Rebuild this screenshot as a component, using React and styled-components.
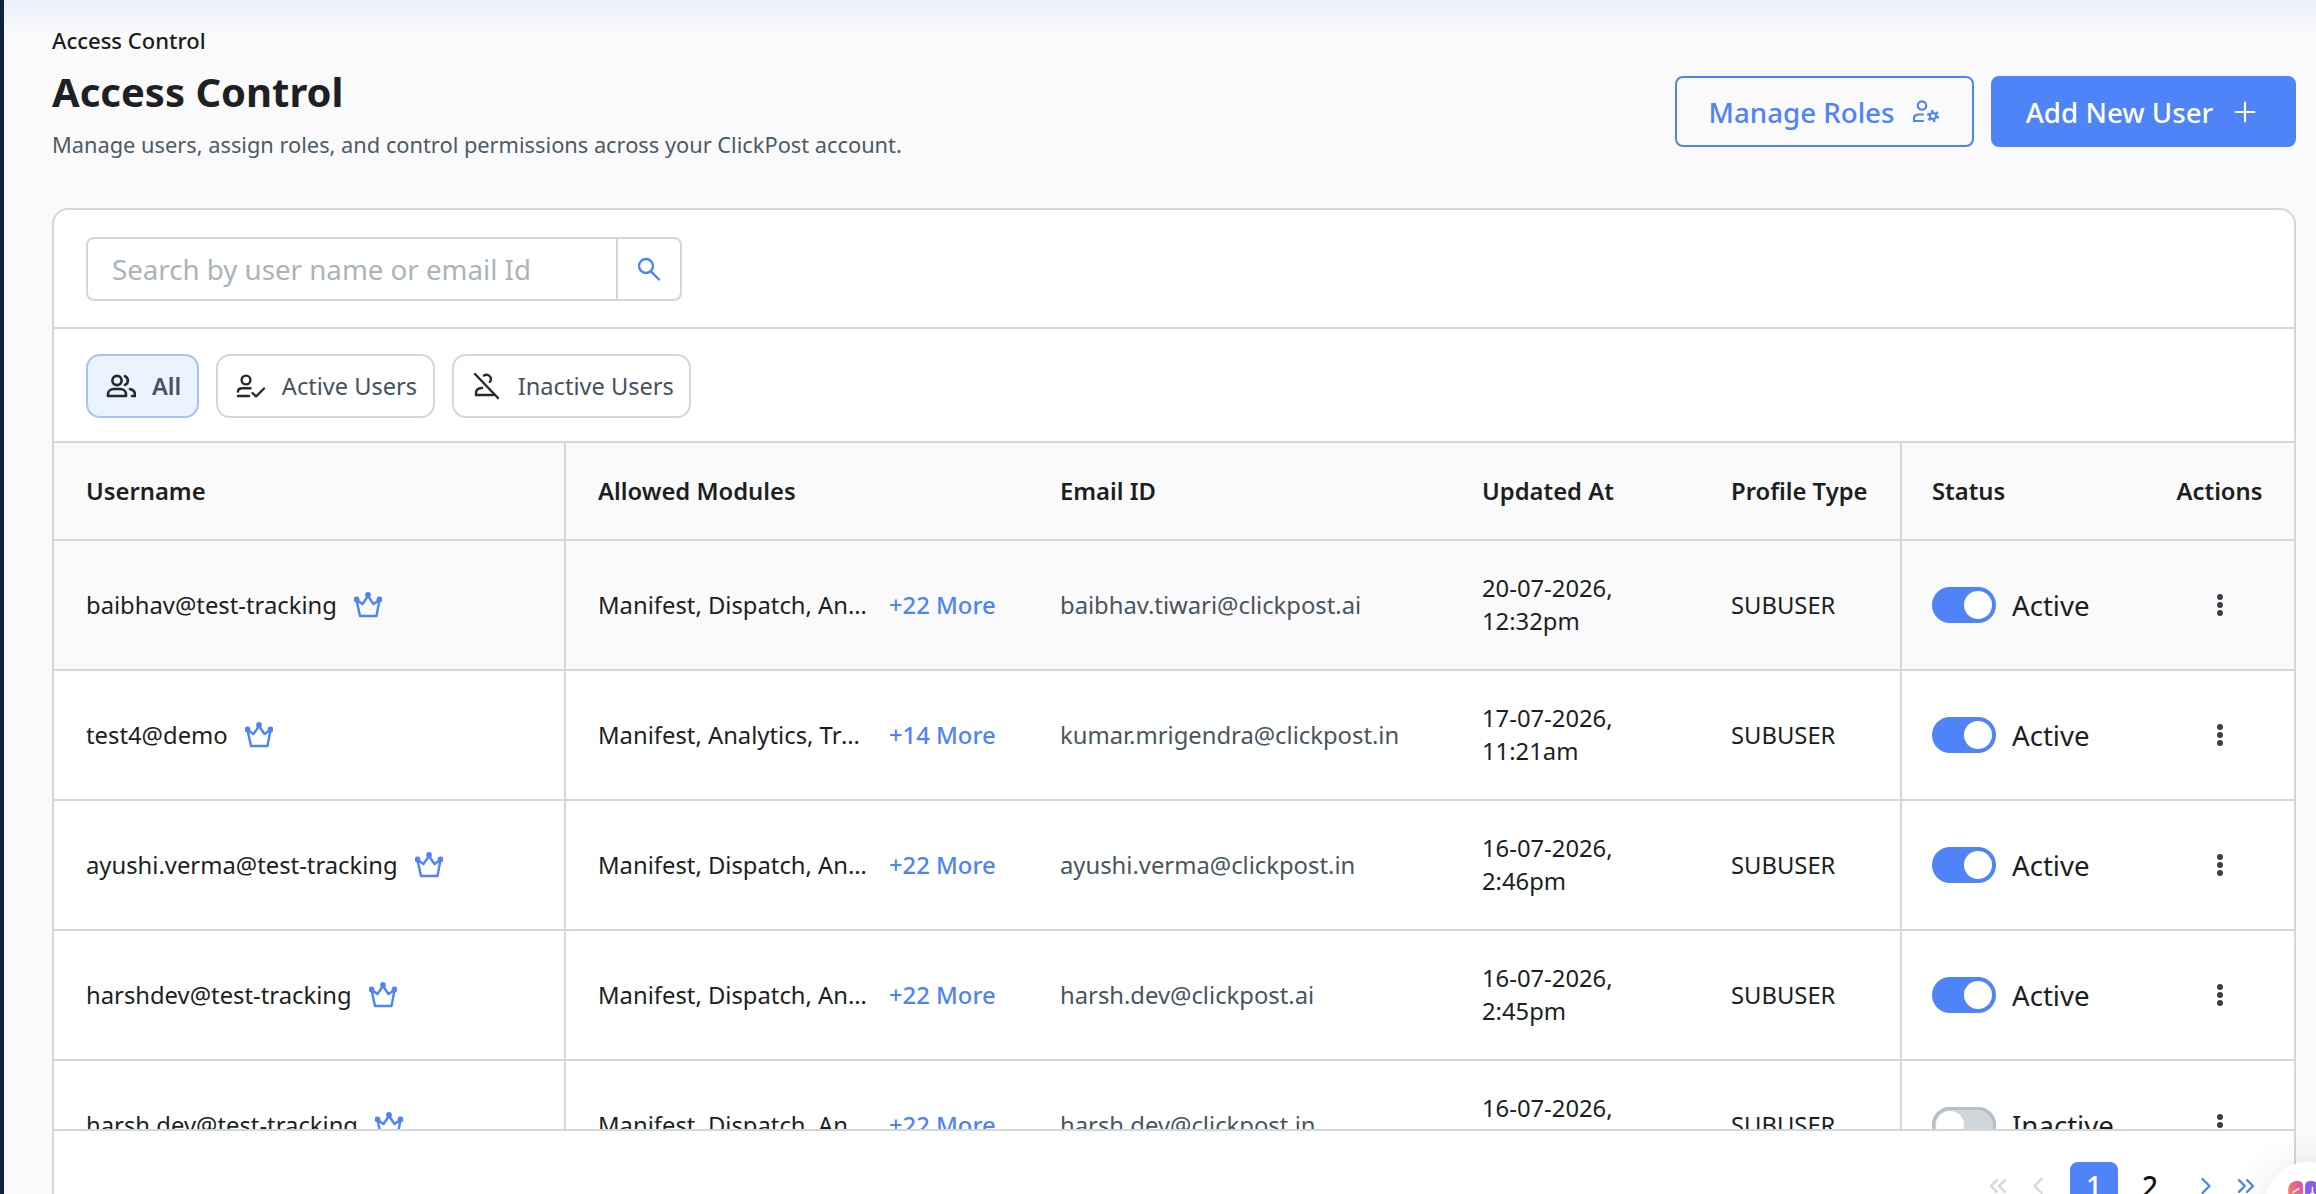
import React from 'react';
import styled, { createGlobalStyle } from 'styled-components';
import { ChevronLeft, ChevronRight, ChevronsLeft, ChevronsRight, Plus } from 'lucide-react';

const Global = createGlobalStyle`
  html, body { margin: 0; height: 1194px; overflow: hidden; background: #fafafa; }
  body { font-family: "Noto Sans", "Open Sans", sans-serif; color: #1a1d20; }
  * { box-sizing: border-box; }
`;

const Shell = styled.div`display: flex; height: 1194px; overflow: hidden; position: relative;`;
const Strip = styled.div`width: 4px; flex: none; background: #10243b;`;
const Main = styled.main`
  flex: 1; min-width: 0; padding: 27px 20px 0 48px;
  background: linear-gradient(#e9eefa 0, #f1f3fa 14px, #fafafa 36px);
`;
const Header = styled.header`display: flex; justify-content: space-between; align-items: flex-start; height: 181px;`;
const Crumb = styled.div`font-size: 22px; line-height: 26px; font-weight: 500; color: #1a1d20;`;
const Title = styled.h1`margin: 11px 0 11px; font-size: 40px; line-height: 56px; font-weight: 700; color: #1e2124;`;
const Sub = styled.p`margin: 0; font-size: 21.8px; line-height: 28px; color: #4a5b68;`;
const Actions = styled.div`display: flex; gap: 17px; margin-top: 49px;`;
const Btn = styled.button`
  height: 71px; display: flex; align-items: center; gap: ${p => p.$gap}px; font: 500 27.7px "Noto Sans", sans-serif;
  border: 2px solid #4f83f8; border-radius: 8px; cursor: pointer;
  width: ${p => p.$w}px; justify-content: center;
  background: ${p => p.$primary ? '#4f83f8' : '#fafafa'};
  color: ${p => p.$primary ? '#fff' : '#4f83f8'};
`;
const Card = styled.section`border: 2px solid #d0d7dd; border-radius: 16px 16px 0 0; background: #fff; height: 1100px;`;
const SearchRow = styled.div`padding: 27px 32px 26px; border-bottom: 2px solid #d0d7dd;`;
const SearchBox = styled.div`
  width: 596px; height: 64px; display: flex; border: 2px solid #d0d7dd; border-radius: 8px; background: #fff;
`;
const Placeholder = styled.div`
  flex: 1; padding-left: 24px; display: flex; align-items: center; font-size: 27.7px; color: #a9b4bc;
  border-right: 2px solid #d0d7dd;
`;
const SearchBtn = styled.div`width: 62px; display: flex; align-items: center; justify-content: center; color: #4f83f8;`;
const Chips = styled.div`display: flex; gap: 17px; padding: 25px 32px 23px; border-bottom: 2px solid #d0d7dd;`;
const Chip = styled.div`
  height: 64px; display: flex; align-items: center; gap: 16px; padding: 0 15.6px 0 18px;
  border: 2px solid ${p => p.$on ? '#a5c3fb' : '#d0d7dd'}; border-radius: 14px;
  background: ${p => p.$on ? '#ebf3fe' : '#fff'};
  color: #45535f; font-size: 23.6px; font-weight: ${p => p.$on ? 600 : 400};
  svg { color: #23292f; flex: none; }
`;
const TableWrap = styled.div`height: 688px; overflow: hidden; border-bottom: 2px solid #d0d7dd;`;
const Row = styled.div`
  display: grid; grid-template-columns: 512px 462px 422px 249px 203px 243px 1fr;
  height: ${p => p.$head ? 98 : 130}px; border-bottom: 2px solid #d0d7dd;
  background: ${p => p.$shade ? '#fafafa' : '#fff'};
`;
const Cell = styled.div`
  display: flex; align-items: center; min-width: 0; padding-left: ${p => p.$pad ?? 32}px;
  ${p => p.$sep && 'border-right: 2px solid #d0d7dd;'}
  ${p => p.$center && 'justify-content: center; padding-left: 0;'}
  font-size: 23.8px; color: ${p => p.$muted ? '#47555f' : '#1c1f22'};
`;
const HeadCell = styled(Cell)`font-weight: 600; color: #1c1f22;`;
const Name = styled.span`margin-right: 17px; white-space: nowrap;`;
const Modules = styled.span`width: 272px; overflow: hidden; white-space: nowrap; text-overflow: ellipsis;`;
const More = styled.span`margin-left: 19px; color: #4f83f8; font-weight: 500; white-space: nowrap;`;
const Stamp = styled.span`line-height: 33px;`;
const Toggle = styled.div`
  width: 64px; height: 36px; border-radius: 18px; display: flex; align-items: center; padding: 0 4px; flex: none;
  justify-content: ${p => p.$on ? 'flex-end' : 'flex-start'};
  background: ${p => p.$on ? '#4f83f8' : '#d0d7dc'};
  ${p => !p.$on && 'box-shadow: inset 0 0 0 3px #b6bfc6;'}
`;
const Knob = styled.div`width: 28px; height: 28px; border-radius: 50%; background: #fff;`;
const StatusText = styled.span`margin-left: 16px; font-size: 27.6px; color: #1c1f22;`;
const Pager = styled.nav`display: flex; justify-content: flex-end; align-items: flex-start; padding: 31px 28px 0 0;`;
const PageIcon = styled.div`
  width: 40px; height: 48px; display: flex; align-items: center; justify-content: center;
  color: ${p => p.$off ? '#d0d7dd' : '#4f83f8'};
`;
const PageNum = styled.div`
  width: 48px; height: 48px; margin: 0 ${p => p.$mr ?? 0}px 0 ${p => p.$ml ?? 0}px; border-radius: 8px; display: flex; align-items: center; justify-content: center;
  font-size: 28px; font-weight: 500;
  background: ${p => p.$on ? '#4f83f8' : 'transparent'}; color: ${p => p.$on ? '#fff' : '#111'};
`;
const Bubble = styled.div`
  position: absolute; left: 2264px; top: 1162px; width: 90px; height: 90px; border-radius: 50%; background: #fff;
  box-shadow: 0 0 36px rgba(40,50,70,.10); padding: 19px 0 0 24px;
`;

const Crown = () => (
  <svg width="28" height="26" viewBox="0 0 28 26" fill="none" stroke="#4f83f8" strokeWidth="2.4" strokeLinejoin="round">
    <path d="M14 4 L19.5 12 L25.5 8 L22.5 24 H6 L2.5 8 L8.5 12 Z" />
    <circle cx="14" cy="3" r="1.7" fill="#4f83f8" /><circle cx="2.5" cy="7.5" r="1.7" fill="#4f83f8" /><circle cx="25.5" cy="7.5" r="1.7" fill="#4f83f8" />
  </svg>
);
const Dots = () => (
  <svg width="10" height="26" viewBox="0 0 10 26" fill="#36414a"><circle cx="5" cy="5" r="3" /><circle cx="5" cy="13" r="3" /><circle cx="5" cy="21" r="3" /></svg>
);
const SearchIcon = () => (
  <svg width="26" height="26" viewBox="0 0 26 26" fill="none" stroke="currentColor" strokeWidth="2.4" strokeLinecap="round">
    <circle cx="10" cy="10" r="7" />
    <path d="M15 15.500l8 8" />
  </svg>
);
const UsersIcon = () => (
  <svg width="30" height="24" viewBox="0 0 30 24" fill="none" stroke="currentColor" strokeWidth="2.6" strokeLinecap="round" strokeLinejoin="round">
    <circle cx="11" cy="6.5" r="4.6" />
    <path d="M2 22v-1.5C2 17 4.800 15 8 15h6c3.200 0 6 2 6 5.500V22z" />
    <path d="M19 2.200a4.800 4.800 0 0 1 0 8.800" />
    <path d="M24 15c2.800.8 5 2.600 5 5.500V22h-3" />
  </svg>
);
const UserCheckIcon = () => (
  <svg width="30" height="24" viewBox="0 0 30 24" fill="none" stroke="currentColor" strokeWidth="2.4" strokeLinecap="round" strokeLinejoin="round">
    <circle cx="10" cy="6" r="4.4" />
    <path d="M2 17.500c0-2 2-3.200 4.500-3.200h8" />
    <path d="M2 22h11" />
    <path d="M16.500 19l3.500 3.500 8-8" />
  </svg>
);
const UserOffIcon = () => (
  <svg width="30" height="28" viewBox="0 0 30 28" fill="none" stroke="currentColor" strokeWidth="2.4" strokeLinecap="round" strokeLinejoin="round">
    <path d="M3 2l23 24" />
    <path d="M12 3.500a4.500 4.500 0 0 1 7 3.500c0 1.200-.4 2.200-1.200 3" />
    <path d="M4 23v-2c0-3 2.500-4.800 6-5" />
    <path d="M4 23h17" />
  </svg>
);
const RolesIcon = () => (
  <svg width="28" height="23" viewBox="0 0 28 23" fill="none" stroke="currentColor" strokeWidth="2.2" strokeLinecap="round" strokeLinejoin="round">
    <circle cx="10" cy="5.500" r="4.200" />
    <path d="M2 21v-2.500c0-2.500 2.200-4 5-4h4" />
    <path d="M2 21h9" />
    <circle cx="21" cy="16" r="3.100" strokeWidth="2" />
    <circle cx="21" cy="16" r="5" strokeWidth="2.200" strokeLinecap="butt" strokeDasharray="2.600 2.640" />
  </svg>
);
const Logo = () => (
  <svg width="32" height="22" viewBox="0 0 43 30">
    <defs>
      <linearGradient id="lg" x1="0" y1="1" x2="1" y2="0"><stop offset="0" stopColor="#f59a3c" /><stop offset="1" stopColor="#d946b8" /></linearGradient>
    </defs>
    <path d="M0 30V12C0 5 5 0 12 0c4 0 8 1 8 6v24z" fill="url(#lg)" />
    <path d="M23 30V6c0-5 4-6 8-6 7 0 12 5 12 12v18z" fill="#8b5cf0" />
    <path d="M6 16l9-6M33 8v8M28 20l5-4 5 4" stroke="#fff" strokeWidth="2" fill="none" />
  </svg>
);

const users = [
  ['baibhav@test-tracking', 'Manifest, Dispatch, Analytics, Tracking', '+22 More', 'baibhav.tiwari@clickpost.ai', '20-07-2026,', '12:32pm', true, true],
  ['test4@demo', 'Manifest, Analytics, Tracking, Returns', '+14 More', 'kumar.mrigendra@clickpost.in', '17-07-2026,', '11:21am', true],
  ['ayushi.verma@test-tracking', 'Manifest, Dispatch, Analytics, Tracking', '+22 More', 'ayushi.verma@clickpost.in', '16-07-2026,', '2:46pm', true],
  ['harshdev@test-tracking', 'Manifest, Dispatch, Analytics, Tracking', '+22 More', 'harsh.dev@clickpost.ai', '16-07-2026,', '2:45pm', true],
  ['harsh.dev@test-tracking', 'Manifest, Dispatch, Analytics, Tracking', '+22 More', 'harsh.dev@clickpost.in', '16-07-2026,', '2:44pm', false],
];

export default function App() {
  return (
    <Shell>
      <Global />
      <Strip />
      <Main>
        <Header>
          <div>
            <Crumb>Access Control</Crumb>
            <Title>Access Control</Title>
            <Sub>Manage users, assign roles, and control permissions across your ClickPost account.</Sub>
          </div>
          <Actions>
            <Btn $w={299} $gap={18}>Manage Roles <RolesIcon /></Btn>
            <Btn $primary $w={305} $gap={16}>Add New User <Plus size={32} strokeWidth={1.6} /></Btn>
          </Actions>
        </Header>
        <Card>
          <SearchRow>
            <SearchBox>
              <Placeholder>Search by user name or email Id</Placeholder>
              <SearchBtn><SearchIcon /></SearchBtn>
            </SearchBox>
          </SearchRow>
          <Chips>
            <Chip $on><UsersIcon />All</Chip>
            <Chip><UserCheckIcon />Active Users</Chip>
            <Chip><UserOffIcon />Inactive Users</Chip>
          </Chips>
          <TableWrap>
            <Row $head $shade>
              <HeadCell $sep>Username</HeadCell>
              <HeadCell>Allowed Modules</HeadCell>
              <HeadCell>Email ID</HeadCell>
              <HeadCell>Updated At</HeadCell>
              <HeadCell $sep>Profile Type</HeadCell>
              <HeadCell $pad={30}>Status</HeadCell>
              <HeadCell $center>Actions</HeadCell>
            </Row>
            {users.map(u => (
              <Row key={u[0]} $shade={u[7]}>
                <Cell $sep><Name>{u[0]}</Name><Crown /></Cell>
                <Cell><Modules>{u[1]}</Modules><More>{u[2]}</More></Cell>
                <Cell $muted>{u[3]}</Cell>
                <Cell><Stamp>{u[4]}<br />{u[5]}</Stamp></Cell>
                <Cell $sep>SUBUSER</Cell>
                <Cell $pad={30}><Toggle $on={u[6]}><Knob /></Toggle><StatusText>{u[6] ? 'Active' : 'Inactive'}</StatusText></Cell>
                <Cell $center><Dots /></Cell>
              </Row>
            ))}
          </TableWrap>
          <Pager>
            <PageIcon $off><ChevronsLeft size={28} strokeWidth={2} /></PageIcon>
            <PageIcon $off><ChevronLeft size={28} strokeWidth={2} /></PageIcon>
            <PageNum $on $ml={12} $mr={8}>1</PageNum>
            <PageNum $mr={12}>2</PageNum>
            <PageIcon><ChevronRight size={28} strokeWidth={2} /></PageIcon>
            <PageIcon><ChevronsRight size={28} strokeWidth={2} /></PageIcon>
          </Pager>
        </Card>
      </Main>
      <Bubble><Logo /></Bubble>
    </Shell>
  );
}
